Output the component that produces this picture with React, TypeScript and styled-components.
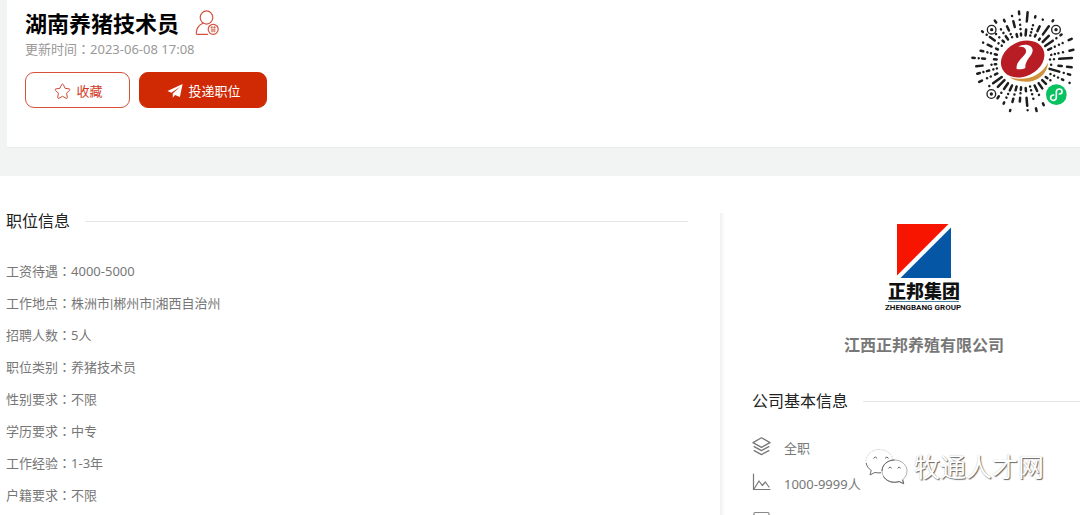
import React from 'react';
import styled, { createGlobalStyle } from 'styled-components';

const GlobalStyle = createGlobalStyle`
  * { box-sizing: border-box; }
  body {
    margin: 0;
    background: #fff;
    font-family: "Noto Sans", "Noto Sans CJK SC", sans-serif;
    font-size: 13px;
    color: #777;
  }
  h1, h2, h3, p, ul, dl, dd { margin: 0; padding: 0; }
`;

const Page = styled.div`
  height: 100vh;
  overflow: hidden;
`;

const Banner = styled.header`
  background: #f2f4f4;
  padding: 0 0 28px 7px;
`;

const BannerCard = styled.div`
  display: flex;
  justify-content: space-between;
  align-items: flex-start;
  height: 148px;
  padding: 7px 0 0 18px;
  background: #fff;
  border-bottom: 1px solid #eceeee;
`;

const TitleRow = styled.div`
  display: flex;
  align-items: center;
  gap: 16px;
  height: 32px;
`;

const JobTitle = styled.h1`
  font-size: 22px;
  line-height: 32px;
  font-weight: 700;
  color: #000;
`;

const Updated = styled.p`
  line-height: 20px;
  color: #999;
`;

const CjkColon = styled.span`
  font-family: "Noto Sans CJK TC", sans-serif;
`;

const Pipe = styled.span`
  font-family: Roboto, sans-serif;
`;

const Actions = styled.div`
  display: flex;
  gap: 9px;
  margin-top: 13px;
`;

const ActionButton = styled.button<{ $primary?: boolean }>`
  display: flex;
  align-items: center;
  justify-content: center;
  gap: 5px;
  width: ${(p) => (p.$primary ? 128 : 105)}px;
  height: 36px;
  padding: 2px 0 0 2px;
  border: 1px solid ${(p) => (p.$primary ? '#d02a04' : '#d6503a')};
  border-radius: 9px;
  background: ${(p) => (p.$primary ? '#d02a04' : '#fff')};
  color: ${(p) => (p.$primary ? '#fff' : '#cf3a24')};
  font-family: inherit;
  font-size: 13px;
  line-height: 20px;
  cursor: pointer;
`;

const Content = styled.main`
  display: grid;
  grid-template-columns: 2fr 1fr;
  padding-top: 32px;
`;

const Details = styled.section`
  padding: 0 32px 0 6px;
`;

const SectionTitle = styled.h2`
  display: flex;
  align-items: center;
  gap: 15px;
  font-size: 16px;
  line-height: 26px;
  font-weight: 400;
  color: #222;

  &::after {
    content: "";
    flex: 1;
    height: 1px;
    background: #e6e6e6;
  }
`;

const Facts = styled.dl`
  margin-top: 21px;
`;

const Fact = styled.div`
  display: flex;
  align-items: baseline;
  height: 32px;
  line-height: 31px;
`;

const Company = styled.aside`
  position: relative;
  height: 400px;
  margin-top: 5px;
  padding-left: 32px;
  background: linear-gradient(to right, #f0f0f0, #fff) no-repeat left top / 5px 100%;
`;

const Brand = styled.div`
  display: flex;
  flex-direction: column;
  align-items: center;
  padding: 10px 0 0 16px;
  margin-bottom: 30px;
`;

const CompanyName = styled.h3`
  margin-top: 17px;
  font-size: 16px;
  line-height: 26px;
  font-weight: 700;
  color: #777;
`;

const CompanyFacts = styled.ul`
  margin-top: 15px;
  list-style: none;
`;

const CompanyFact = styled.li`
  display: flex;
  align-items: center;
  gap: 12px;
  height: 36px;
`;

const Watermark = styled.div`
  position: absolute;
  right: 36px;
  top: 234px;
  display: flex;
  align-items: center;
  gap: 6px;
  font-size: 26px;
  line-height: 40px;
  color: #fff;
  text-shadow: 1px 1px 1px #666, 0 0 1px #bbb;
  white-space: nowrap;
`;

const ResumeIcon = () => (
  <svg width="24" height="26" viewBox="0 0 24 26" fill="none" stroke="#d2523f" strokeWidth="1.2">
    <ellipse cx="11.500" cy="7.5" rx="6.3" ry="6.6" />
    <path d="M8 13.3C4 15 1.400 19 1.300 23.2c0 .8.4 1.1 1 1.1H12.500" strokeLinecap="round" />
    <circle cx="18.200" cy="19.3" r="5" />
    <path d="M15.500 17.3h5.4M16.700 16v2.3M19.500 16v2.3M15.700 19.1h5M15.900 21h4.8M17.100 19v3.2M19.200 19v3.2" strokeWidth=".7" />
  </svg>
);

const StarIcon = () => (
  <svg width="17" height="17" viewBox="0 0 17 17" fill="none" stroke="#cf4a35" strokeWidth="1">
    <path strokeLinejoin="round" d="M7.7 1.5q.8-1.2 1.6 0l1.8 3.8 4.1.6q1.2.3.4 1.3l-3 3 .7 4.3q0 1.3-1.2.8L8.500 13.300 4.900 15.300q-1.200.5-1.200-.8l.7-4.300-3-3q-.8-1 .4-1.300l4.100-.6z" />
  </svg>
);

const PlaneIcon = () => (
  <svg width="16" height="16" viewBox="0 0 16 16" fill="#fff">
    <path d="M15.600 1 .5 8.100l3.900 1.700L13 3.700 5.800 10.500v4.200l2.200-2.800 4.900 2z" />
  </svg>
);

const LayersIcon = () => (
  <svg width="20" height="20" viewBox="0 0 20 20" fill="none" stroke="#777" strokeWidth="1.300" strokeLinejoin="round" strokeLinecap="round">
    <path d="M9.500 .8 18 5.600l-8.500 4.800L1 5.600z" />
    <path d="m2.200 9.600 7.300 4 7.300-4" />
    <path d="m2.200 13.600 7.300 4 7.300-4" />
  </svg>
);

const ChartIcon = () => (
  <svg width="20" height="20" viewBox="0 0 20 20" fill="none" stroke="#777" strokeWidth="1.200" strokeLinejoin="round" strokeLinecap="round">
    <path d="M1.500 1v15.500H18" />
    <path d="M2 16 7 8l3.300 4.500 3-3.500 3.700 5" />
  </svg>
);

const CalendarIcon = () => (
  <svg width="20" height="20" viewBox="0 0 20 20" fill="none" stroke="#888" strokeWidth="1.200">
    <rect x="2" y="3.500" width="15" height="15" rx="1" />
    <path d="M2 8h15" />
  </svg>
);

const ChatIcon = () => (
  <svg width="43" height="38" viewBox="0 0 43 38" fill="#fff" strokeLinejoin="round">
    <path d="M14.500 1.500C7 1.500 1 6.700 1 13.200c0 3.800 2 7 5.200 9.100L5 27l5-2.600c1.500.4 3 .6 4.600.6 7.400 0 13.400-5.300 13.400-11.800S22 1.500 14.500 1.500z" stroke="#ccc" strokeWidth=".8" strokeDasharray="2 1" />
    <path d="M1.200 15c.4 3 2.200 5.500 5 7.300L5 27l5-2.600c2 .5 4 .6 6 .3" fill="none" stroke="#777" strokeWidth="1" />
    <path d="M29.500 12C22.500 12 17 16.900 17 23s5.500 11.300 12.500 11.300c1.600 0 3.200-.3 4.600-.8l4.600 2.200-1.100-4C40.300 29.500 42 26.500 42 23c0-6.100-5.500-11-12.500-11z" stroke="#999" strokeWidth=".8" />
    <path d="M17 23c0-6.100 5.500-11 12.500-11M18.500 28.500c2 3.600 6.200 5.800 11 5.800 1.600 0 3.200-.3 4.600-.8l4.600 2.200-1.100-4" fill="none" stroke="#666" strokeWidth="1" />
    <path d="M8.500 10.300q1.800-2.600 3.600 0M20 10.300q1.800-2.600 3.600 0M23.500 20.300q1.600-2.400 3.200 0M32.500 20.300q1.600-2.400 3.200 0" fill="none" stroke="#666" />
  </svg>
);

const CompanyLogo = () => (
  <svg width="80" height="92" viewBox="0 0 80 92">
    <path d="M13 1h51.500L13 52.500z" fill="#f81500" />
    <path d="M67 4.500V55H16.500z" fill="#0557a5" />
    <text x="40" y="75" textAnchor="middle" fontFamily="Noto Sans CJK SC, sans-serif" fontSize="18" fontWeight="900" fill="#111">正邦集团</text>
    <path d="M4 78.500h71" stroke="#4f8099" />
    <text x="39" y="87" textAnchor="middle" fontFamily="Roboto, sans-serif" fontSize="8" fontWeight="700" fill="#111">ZHENGBANG GROUP</text>
  </svg>
);

// Each ray: angle in degrees, then pairs of inner and outer radius.
const rays: [number, number[]][] = [
  [-4, [80, 80, 92, 92, 108, 146]],
  [-13, [86, 86, 97, 97, 108, 108, 122, 122, 142, 154]],
  [-25, [82, 92, 104, 104, 118, 118, 130, 130, 150, 160]],
  [-35, [80, 108, 121, 121, 136, 140]],
  [-45, [82, 108]],
  [-54, [80, 84, 100, 130, 149, 152]],
  [-65, [82, 88, 100, 116, 138, 138]],
  [-75, [80, 80, 90, 90, 100, 100, 112, 112, 136, 140]],
  [-85, [78, 96, 120, 148]],
  [-95, [78, 84, 97, 97, 110, 110, 125, 125, 142, 150]],
  [-104, [76, 84, 106, 124, 140, 140]],
  [-115, [80, 80, 90, 90, 102, 116, 132, 137]],
  [-125, [80, 92, 104, 104, 117, 117, 142, 149]],
  [-135, [82, 88, 102, 102, 116, 116]],
  [-144, [80, 80, 92, 92, 106, 124, 136, 136, 150, 153]],
  [-155, [84, 90, 105, 118, 133, 133]],
  [-166, [82, 88, 100, 100, 111, 111, 124, 132]],
  [-176, [80, 88, 115, 124, 134, 134, 146, 153]],
  [174, [82, 86, 96, 96, 123, 142]],
  [165, [82, 82, 93, 93, 106, 113, 124, 124, 135, 143]],
  [155, [86, 94, 108, 108, 120, 120, 137, 146]],
  [144, [80, 112, 126, 126]],
  [135, [80, 108]],
  [125, [80, 101, 115, 115, 128, 135]],
  [115, [80, 96, 108, 108, 120, 120, 136, 140]],
  [105, [78, 90, 103, 103, 116, 126, 151, 154]],
  [95, [78, 86, 96, 96, 110, 121]],
  [85, [80, 90, 110, 134, 147, 147]],
  [75, [78, 78, 90, 90, 102, 102, 116, 116, 146, 154]],
  [65, [80, 98, 111, 111, 139, 145]],
  [55, [80, 99]],
  [45, [80, 96]],
  [35, [82, 88, 99, 99]],
  [25, [90, 90, 102, 102, 115, 115, 128, 132, 153, 153]],
  [16, [82, 112, 126, 126, 139, 146]],
  [7, [84, 84, 106, 116, 132, 146]],
];

const QrCode = () => (
  <svg width="120" height="120" viewBox="0 0 360 360" role="img" aria-label="小程序码">
    <g stroke="#1d1d1d" strokeWidth="7.500" strokeLinecap="round">
      {rays.map(([deg, radii]) => {
        const c = Math.cos((deg * Math.PI) / 180);
        const s = Math.sin((deg * Math.PI) / 180);
        return radii
          .filter((_, i) => i % 2 === 0)
          .map((r, i) => {
            const end = radii[i * 2 + 1] + 0.1;
            return <line key={`${deg}-${r}`} x1={190 + r * c} y1={184 + r * s} x2={190 + end * c} y2={184 + end * s} />;
          });
      })}
    </g>
    {[[95, 89], [288, 89], [94, 282]].map(([x, y]) => (
      <g key={`${x}-${y}`}>
        <circle cx={x} cy={y} r="13" fill="#fff" stroke="#222" strokeWidth="4" />
        <circle cx={x} cy={y} r="5" fill="#222" />
      </g>
    ))}
    <path d="M150 232C200 246 244 226 264 188C262 222 232 246 198 245C178 245 162 241 150 232z" fill="#d0913a" />
    <ellipse cx="188" cy="177" rx="68" ry="52" transform="rotate(-26 188 177)" fill="#b81c25" />
    <path d="M174 141C192 128 219 134 218 152C217 168 194 180 196 204C190 208 178 209 170 207C166 184 195 170 198 156C200 144 188 139 174 141z" fill="#fff" />
    <circle cx="289" cy="284" r="31" fill="#08c15f" />
    <path d="M281 285c-12 0-12 16-1 16 6 0 9-4 9-9v-16c0-6 4-9 9-9 11 0 11 15 0 15" fill="none" stroke="#fff" strokeWidth="5" strokeLinecap="round" />
  </svg>
);

const QrHolder = styled.div`
  flex: none;
  height: 120px;
  margin-top: -7px;
`;

const Colon = () => <CjkColon lang="zh-TW">：</CjkColon>;

const facts: [string, string[]][] = [
  ['工资待遇', ['4000-5000']],
  ['工作地点', ['株洲市', '郴州市', '湘西自治州']],
  ['招聘人数', ['5人']],
  ['职位类别', ['养猪技术员']],
  ['性别要求', ['不限']],
  ['学历要求', ['中专']],
  ['工作经验', ['1-3年']],
  ['户籍要求', ['不限']],
];

export default function App() {
  return (
    <Page lang="zh-CN">
      <GlobalStyle />
      <Banner>
        <BannerCard>
          <div>
            <TitleRow>
              <JobTitle>湖南养猪技术员</JobTitle>
              <ResumeIcon />
            </TitleRow>
            <Updated>更新时间<Colon />2023-06-08 17:08</Updated>
            <Actions>
              <ActionButton type="button"><StarIcon />收藏</ActionButton>
              <ActionButton type="button" $primary><PlaneIcon />投递职位</ActionButton>
            </Actions>
          </div>
          <QrHolder><QrCode /></QrHolder>
        </BannerCard>
      </Banner>
      <Content>
        <Details>
          <SectionTitle>职位信息</SectionTitle>
          <Facts>
            {facts.map(([label, values]) => (
              <Fact key={label}>
                <dt>{label}<Colon /></dt>
                <dd>
                  {values.map((value, i) => (
                    <React.Fragment key={value}>
                      {i > 0 && <Pipe>|</Pipe>}
                      {value}
                    </React.Fragment>
                  ))}
                </dd>
              </Fact>
            ))}
          </Facts>
        </Details>
        <Company>
          <Brand>
            <CompanyLogo />
            <CompanyName>江西正邦养殖有限公司</CompanyName>
          </Brand>
          <SectionTitle>公司基本信息</SectionTitle>
          <CompanyFacts>
            <CompanyFact><LayersIcon />全职</CompanyFact>
            <CompanyFact><ChartIcon />1000-9999人</CompanyFact>
            <CompanyFact><CalendarIcon /></CompanyFact>
          </CompanyFacts>
          <Watermark><ChatIcon />牧通人才网</Watermark>
        </Company>
      </Content>
    </Page>
  );
}
